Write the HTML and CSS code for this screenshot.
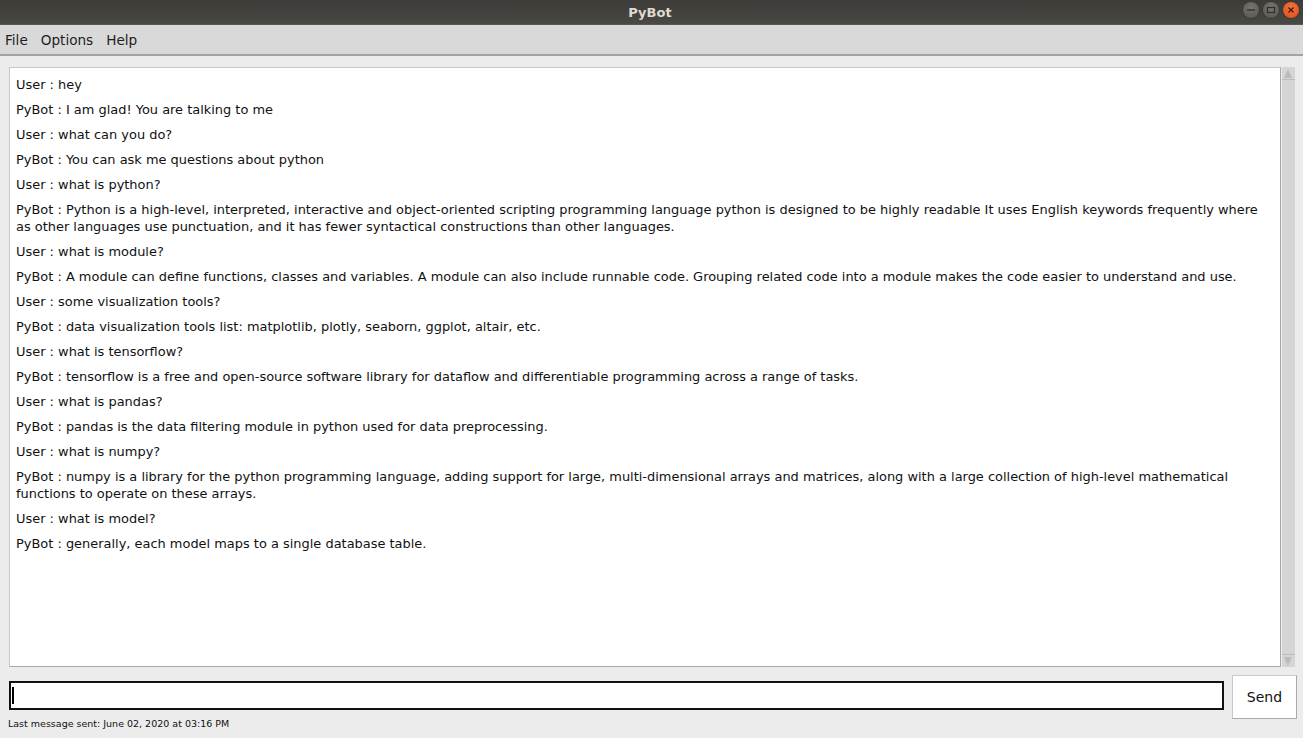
FILE: index.html
```html
<!DOCTYPE html>
<html>
<head>
<meta charset="utf-8">
<title>PyBot</title>
<link rel="stylesheet" href="styles.css">
</head>
<body>
<div class="window">
  <div class="titlebar">
    <span class="title">PyBot</span>
    <div class="controls">
      <span class="ctl ctl-min"><svg width="16" height="16" viewBox="0 0 16 16"><line x1="4" y1="8" x2="12" y2="8" stroke="#2f2e2b" stroke-width="1.3"/></svg></span>
      <span class="ctl ctl-max"><svg width="16" height="16" viewBox="0 0 16 16"><rect x="4.5" y="5.5" width="7" height="5" fill="none" stroke="#2f2e2b" stroke-width="1.2"/></svg></span>
      <span class="ctl ctl-close"><svg width="16" height="16" viewBox="0 0 16 16"><path d="M5.5 5.5 L10.5 10.5 M10.5 5.5 L5.5 10.5" stroke="#3a1a0c" stroke-width="1.3"/></svg></span>
    </div>
  </div>
  <div class="menubar">
    <span class="menu-item">File</span>
    <span class="menu-item">Options</span>
    <span class="menu-item">Help</span>
  </div>
  <div class="content">
    <div class="chat-row">
      <div class="chat">
        <p>User : hey</p>
        <p>PyBot : I am glad! You are talking to me</p>
        <p>User : what can you do?</p>
        <p>PyBot : You can ask me questions about python</p>
        <p>User : what is python?</p>
        <p>PyBot : Python is a high-level, interpreted, interactive and object-oriented scripting programming language python is designed to be highly readable It uses English keywords frequently where as other languages use punctuation, and it has fewer syntactical constructions than other languages.</p>
        <p>User : what is module?</p>
        <p>PyBot : A module can define functions, classes and variables. A module can also include runnable code. Grouping related code into a module makes the code easier to understand and use.</p>
        <p>User : some visualization tools?</p>
        <p>PyBot : data visualization tools list: matplotlib, plotly, seaborn, ggplot, altair, etc.</p>
        <p>User : what is tensorflow?</p>
        <p>PyBot : tensorflow is a free and open-source software library for dataflow and differentiable programming across a range of tasks.</p>
        <p>User : what is pandas?</p>
        <p>PyBot : pandas is the data filtering module in python used for data preprocessing.</p>
        <p>User : what is numpy?</p>
        <p>PyBot : numpy is a library for the python programming language, adding support for large, multi-dimensional arrays and matrices, along with a large collection of high-level mathematical functions to operate on these arrays.</p>
        <p>User : what is model?</p>
        <p>PyBot : generally, each model maps to a single database table.</p>
      </div>
      <div class="scrollbar">
        <span class="arrow arrow-up"></span>
        <span class="track"></span>
        <span class="arrow arrow-down"></span>
      </div>
    </div>
    <div class="input-row">
      <div class="entry"><span class="caret"></span></div>
      <button class="send">Send</button>
    </div>
    <div class="status">Last message sent: June 02, 2020 at 03:16 PM</div>
  </div>
</div>
</body>
</html>
```
FILE: styles.css
```css
* { box-sizing: border-box; }
html, body { margin: 0; padding: 0; }
body {
  width: 1303px;
  height: 738px;
  overflow: hidden;
  background: #ececec;
  font-family: "DejaVu Sans", sans-serif;
}
.window { display: flex; flex-direction: column; height: 738px; }
.titlebar {
  height: 25px;
  background: linear-gradient(#3c3b37, #4a4843);
  border-bottom: 1px solid #5b5953;
  display: flex;
  align-items: center;
  justify-content: center;
  position: relative;
}
.title {
  color: #dfdbd2;
  font-family: "DejaVu Sans", sans-serif;
  font-weight: bold;
  font-size: 13px;
  margin-left: -3px;
}
.controls {
  position: absolute;
  right: 4px;
  top: 2px;
  display: flex;
  gap: 4px;
}
.ctl {
  width: 16px;
  height: 16px;
  border-radius: 50%;
  display: flex;
  background: radial-gradient(circle at 50% 35%, #77756f, #55534e);
  box-shadow: 0 0 0 1px #3a3935;
}
.ctl-close { background: radial-gradient(circle at 50% 35%, #f3743f, #df4a12); }
.menubar {
  height: 31px;
  background: #d9d9d9;
  border-bottom: 2px solid #a3a3a3;
  display: flex;
  align-items: center;
  padding-left: 5px;
  gap: 13px;
}
.menu-item {
  font-size: 13.6px;
  color: #1e1e1e;
  padding-top: 1px;
}
.menu-item + .menu-item { margin-left: 0; }
.content {
  flex: 1;
  display: flex;
  flex-direction: column;
  padding: 11px 6px 0 9px;
}
.chat-row {
  display: flex;
  height: 600px;
}
.chat {
  width: 1272px;
  height: 600px;
  background: #fff;
  border: 1px solid #a8a8a8;
  border-top-color: #c8c8c8;
  border-left-color: #c8c8c8;
  padding: 8px 6px;
  font-size: 12.95px;
  color: #111;
  overflow: hidden;
}
.chat p {
  margin: 0 0 8px 0;
  line-height: 17px;
}
.scrollbar {
  width: 13px;
  background: #d5d5d5;
  display: flex;
  flex-direction: column;
  margin-left: 1px;
}
.arrow {
  height: 13px;
  display: block;
  position: relative;
  border-bottom: 1px solid #bdbdbd;
}
.arrow-down { border-bottom: none; border-top: 1px solid #bdbdbd; }
.arrow-up::after, .arrow-down::after {
  content: "";
  position: absolute;
  left: 2px;
  border-left: 4.5px solid transparent;
  border-right: 4.5px solid transparent;
}
.arrow-up::after { top: 2px; border-bottom: 9px solid #bcbcbc; }
.arrow-down::after { top: 2px; border-top: 9px solid #bcbcbc; }
.track { flex: 1; }
.input-row {
  display: flex;
  align-items: flex-start;
  margin-top: 8px;
}
.entry {
  margin-top: 6px;
  width: 1215px;
  height: 29px;
  background: #fff;
  border: 2px solid #111;
  padding: 4px 0 0 1px;
}
.caret {
  display: block;
  width: 2px;
  height: 17px;
  background: #000;
}
.send {
  margin-left: 8px;
  width: 65px;
  height: 44px;
  background: #fff;
  border: 1px solid #c9c9c9;
  border-right-color: #a9a9a9;
  border-bottom-color: #a9a9a9;
  font-family: "DejaVu Sans", sans-serif;
  font-size: 14px;
  color: #111;
  padding: 0;
}
.status {
  font-size: 9.5px;
  color: #111;
  margin-left: -1px;
  line-height: 10px;
}
```
